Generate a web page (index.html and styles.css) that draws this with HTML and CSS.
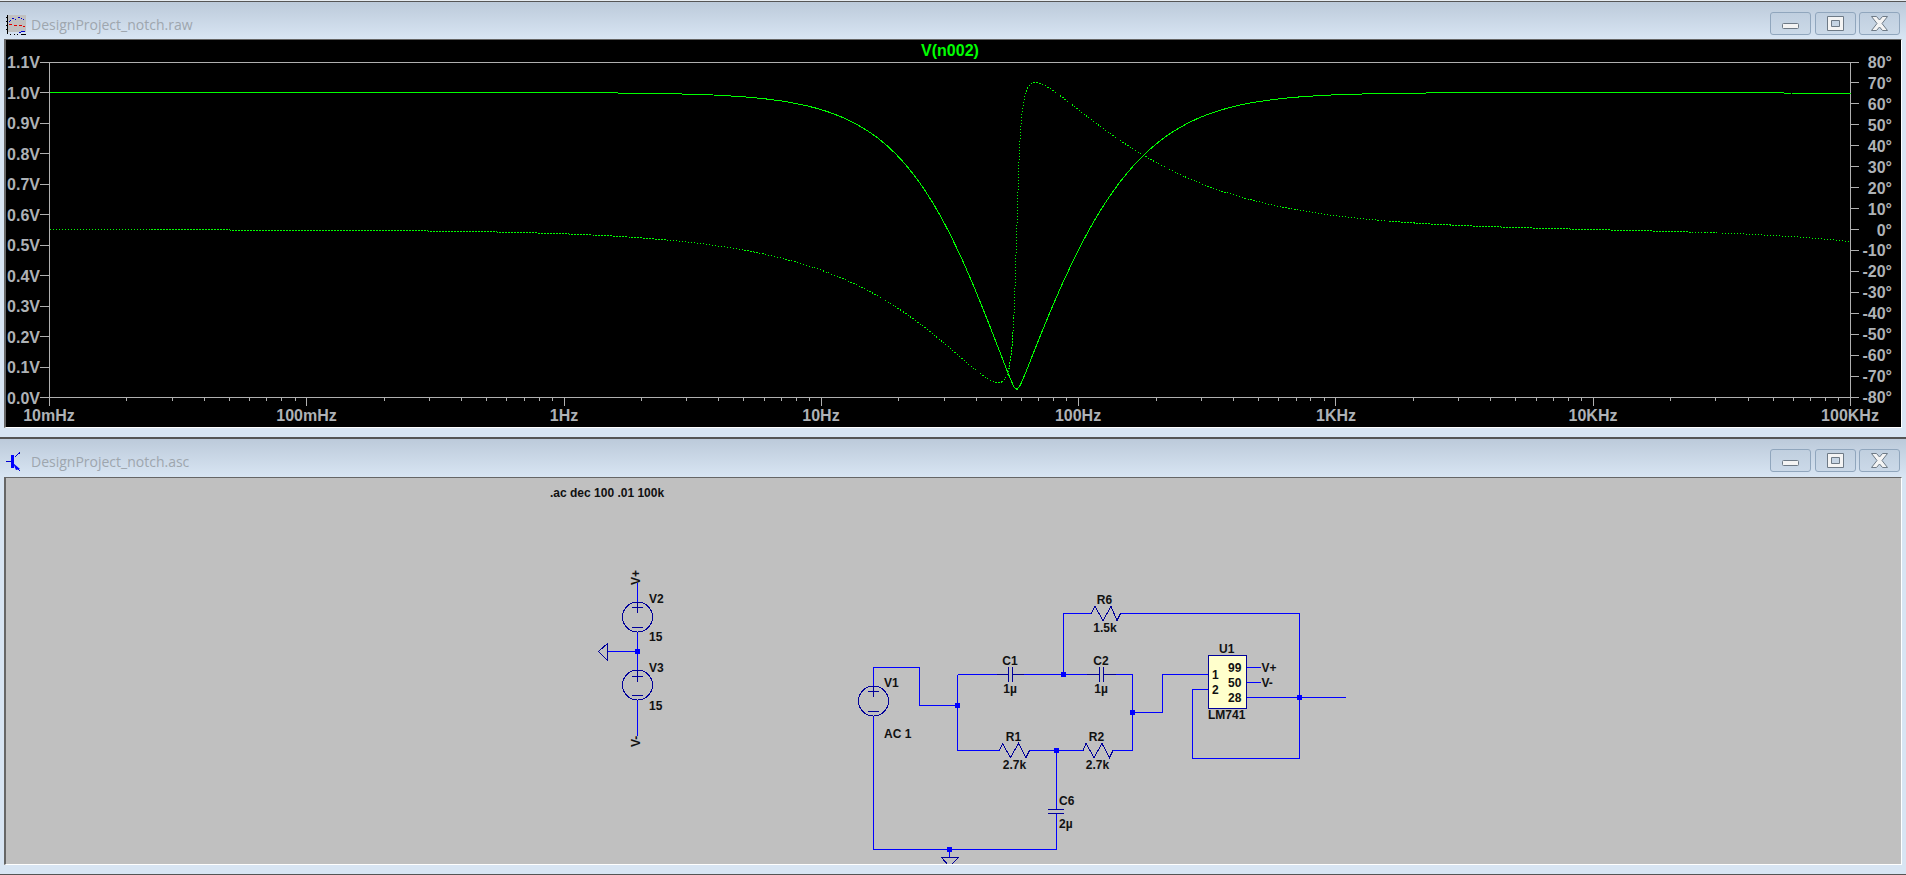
FILE: index.html
```html
<!DOCTYPE html>
<html lang="en">
<head>
<meta charset="utf-8">
<title>LTspice</title>
<link rel="stylesheet" href="styles.css">
</head>
<body>
<section class="window window-plot">
  <header class="titlebar">
    <svg class="app-icon" viewBox="0 0 20 20" width="20" height="20">
      <rect x="2" y="0" width="18" height="17" fill="#c0c0c0"/>
      <path class="i-black" d="M1.5 0V19M0 2.5H1M0 6.5H1M0 10.5H1M0 14.5H1M4 19.5H5M8 19.5H9M11 19.5H12M15 19.5H20"/>
      <path class="i-blue" stroke-dasharray="1 1" d="M3 7L7 3L10 5L13 2L19 5"/>
      <path class="i-red" stroke-dasharray="3 2" d="M3 9L9 11L13 10L19 12"/>
      <path class="i-blue" d="M13 17.5H15M15 16.5H19"/>
    </svg>
    <span class="doc-name">DesignProject_notch.raw</span>
    <div class="win-buttons">
      <button class="win-btn win-btn-min"><svg viewBox="0 0 17 6" width="17" height="6"><rect class="glyph" x=".5" y=".5" width="16" height="5" rx="1"/></svg></button>
      <button class="win-btn"><svg viewBox="0 0 17 15" width="17" height="15"><path class="glyph" fill-rule="evenodd" d="M.5 .5H16.5V14.5H.5ZM4.5 4.5V10.5H12.5V4.5Z"/></svg></button>
      <button class="win-btn"><svg viewBox="0 0 17 15" width="17" height="15"><path class="glyph" d="M.5 .5H5.5L8.5 4L11.5 .5H16.5L11 7.5L16.5 14.5H11.5L8.5 11L5.5 14.5H.5L6 7.5Z"/></svg></button>
    </div>
  </header>
  <div class="pane pane-plot">
    <svg class="canvas" viewBox="6 40 1895 387" width="1895" height="387">
      <path id="axes" class="axis"/>
      <path id="mag" class="trace"/>
      <path id="phase" class="trace trace-phase"/>
      <text class="plot-title" x="950" y="56">V(n002)</text>
      <g class="ylabels">
        <text x="40" y="68">1.1V</text><text x="40" y="98.5">1.0V</text><text x="40" y="129">0.9V</text><text x="40" y="159.5">0.8V</text><text x="40" y="190">0.7V</text><text x="40" y="220.5">0.6V</text><text x="40" y="251">0.5V</text><text x="40" y="281.5">0.4V</text><text x="40" y="312">0.3V</text><text x="40" y="342.5">0.2V</text><text x="40" y="373">0.1V</text><text x="40" y="403.5">0.0V</text>
      </g>
      <g class="ylabels">
        <text x="1892" y="68">80°</text><text x="1892" y="89">70°</text><text x="1892" y="110">60°</text><text x="1892" y="131">50°</text><text x="1892" y="152">40°</text><text x="1892" y="173">30°</text><text x="1892" y="194">20°</text><text x="1892" y="215">10°</text><text x="1892" y="236">0°</text><text x="1892" y="256">-10°</text><text x="1892" y="277">-20°</text><text x="1892" y="298">-30°</text><text x="1892" y="319">-40°</text><text x="1892" y="340">-50°</text><text x="1892" y="361">-60°</text><text x="1892" y="382">-70°</text><text x="1892" y="403">-80°</text>
      </g>
      <g class="xlabels">
        <text x="49" y="421">10mHz</text><text x="306.5" y="421">100mHz</text><text x="564" y="421">1Hz</text><text x="821" y="421">10Hz</text><text x="1078" y="421">100Hz</text><text x="1336" y="421">1KHz</text><text x="1593" y="421">10KHz</text><text x="1850" y="421">100KHz</text>
      </g>
    </svg>
  </div>
</section>

<section class="window window-schematic">
  <header class="titlebar">
    <svg class="app-icon" viewBox="0 0 20 20" width="20" height="20">
      <path class="i-blue" d="M0 10.5H5M14 1.5L9 6M9 15L14 20"/>
      <rect x="5" y="4" width="3" height="13" fill="#0000ff"/>
      <path d="M7 12L14 18L10 19Z" fill="#0000ff"/>
    </svg>
    <span class="doc-name">DesignProject_notch.asc</span>
    <div class="win-buttons">
      <button class="win-btn win-btn-min"><svg viewBox="0 0 17 6" width="17" height="6"><rect class="glyph" x=".5" y=".5" width="16" height="5" rx="1"/></svg></button>
      <button class="win-btn"><svg viewBox="0 0 17 15" width="17" height="15"><path class="glyph" fill-rule="evenodd" d="M.5 .5H16.5V14.5H.5ZM4.5 4.5V10.5H12.5V4.5Z"/></svg></button>
      <button class="win-btn"><svg viewBox="0 0 17 15" width="17" height="15"><path class="glyph" d="M.5 .5H5.5L8.5 4L11.5 .5H16.5L11 7.5L16.5 14.5H11.5L8.5 11L5.5 14.5H.5L6 7.5Z"/></svg></button>
    </div>
  </header>
  <div class="pane pane-schematic">
    <svg class="canvas" viewBox="6 478 1895 386" width="1895" height="386">
      <path class="wire" d="M873.5 686V667.5H919.5V705.5H957.5M957.5 674.5V750.5H999.5M957.5 674.5H997M1024 674.5H1087M1063.5 674.5V613.5H1091M1120.5 613.5H1299.5V758.5H1192.5V689.5H1208M1116 674.5H1132.5V750.5H1113M1029.5 750.5H1083M1056.5 750.5V809M1056.5 814V849.5H873.5V716M1132.5 712.5H1162.5V674.5H1208M949.5 849.5V857M1247 697.5H1345.5M1247 667.5H1261M1247 682.5H1261M637.5 583V602M637.5 632V670M637.5 700V736M637.5 651.5H608"/>
      <g class="part">
        <circle cx="873.5" cy="701" r="15"/><path d="M868 691.5H879M873.5 686V697M868 711.5H879"/>
        <circle cx="637.5" cy="617" r="15"/><path d="M632 607.5H643M637.5 602V613M632 627.5H643"/>
        <circle cx="637.5" cy="685" r="15"/><path d="M632 676.5H643M637.5 671V682M632 695.5H643"/>
        <path d="M607.5 643.5V660.5L598.5 651.5Z"/>
        <path d="M941.5 857.5H958.5L949.5 866.5Z"/>
        <path d="M1008.5 667V682M1012.5 667V682M997 674.5H1008M1013 674.5H1024"/>
        <path d="M1099.5 667V682M1103.5 667V682M1087 674.5H1099M1104 674.5H1116"/>
        <path d="M1048 809.5H1064M1048 813.5H1064"/>
        <path d="M1091 613.5L1095 606.5L1103 620.5L1111 606.5L1117 620.5L1120.5 613.5"/>
        <path d="M999.5 750.5L1002.5 743.5L1010.5 757.5L1018.5 743.5L1026 757.5L1029.5 750.5"/>
        <path d="M1083 750.5L1086 743.5L1094 757.5L1102 743.5L1109.5 757.5L1113 750.5"/>
        <rect class="ic" x="1208.5" y="655.5" width="38" height="53"/>
      </g>
      <g class="nodes">
        <rect x="635" y="649" width="5" height="5"/><rect x="955" y="703" width="5" height="5"/><rect x="1061" y="672" width="5" height="5"/><rect x="1130" y="710" width="5" height="5"/><rect x="1054" y="748" width="5" height="5"/><rect x="947" y="847" width="5" height="5"/><rect x="1297" y="695" width="5" height="5"/>
      </g>
      <g class="sch-text">
        <text x="550" y="497">.ac dec 100 .01 100k</text>
        <text x="649" y="603">V2</text><text x="649" y="641">15</text><text x="649" y="672">V3</text><text x="649" y="710">15</text>
        <text x="884" y="687">V1</text><text x="884" y="738">AC 1</text>
        <text class="mid" x="1010" y="665">C1</text><text class="mid" x="1010" y="693">1µ</text>
        <text class="mid" x="1101" y="665">C2</text><text class="mid" x="1101" y="693">1µ</text>
        <text class="mid" x="1104.5" y="604">R6</text><text class="mid" x="1105" y="632">1.5k</text>
        <text class="mid" x="1013.5" y="741">R1</text><text class="mid" x="1014.5" y="769">2.7k</text>
        <text class="mid" x="1096.5" y="741">R2</text><text class="mid" x="1097.5" y="769">2.7k</text>
        <text x="1059" y="805">C6</text><text x="1059" y="828">2µ</text>
        <text x="1219" y="653">U1</text><text x="1208" y="719">LM741</text>
        <text x="1212" y="679">1</text><text x="1212" y="694">2</text>
        <text x="1228" y="672">99</text><text x="1228" y="687">50</text><text x="1228" y="702">28</text>
        <text x="1261.5" y="672">V+</text><text x="1261.5" y="687">V-</text>
        <text class="rot-a" x="0" y="0">V+</text>
        <text class="rot-b" x="0" y="0">V-</text>
      </g>
    </svg>
  </div>
</section>
<script src="plot.js"></script>
</body>
</html>
```
FILE: styles.css
```css
* { box-sizing: border-box; }
html, body { margin: 0; padding: 0; height: 875px; overflow: hidden; background: #d8e5f3; }
body { display: flex; flex-direction: column; }

.window { display: flex; flex-direction: column; flex: none; background: #d8e5f3; }
.window-plot { height: 437px; border-top: 1px solid #e6ebf0; }
.window-schematic { height: 438px; border-top: 2px solid #555; border-bottom: 1px solid #555; }

.titlebar {
  display: flex; align-items: flex-start; flex: none;
  background: linear-gradient(#bccada, #d8e5f3);
  padding: 10px 6px 0 6px;
}
.window-plot .titlebar { height: 38px; border-top: 1px solid #555; }
.window-schematic .titlebar { height: 38px; }

.app-icon { flex: none; margin-top: 2px; }
.window-plot .app-icon { margin-top: 3px; }
.i-black, .i-blue, .i-red { fill: none; stroke-width: 1; shape-rendering: crispEdges; }
.i-black { stroke: #000; }
.i-blue { stroke: #0000d0; }
.i-red { stroke: #e00000; }

.doc-name {
  font: 14px "Open Sans", "Noto Sans", sans-serif;
  color: #9ea6ae;
  margin: 2px 0 0 5px;
  line-height: 22px;
  white-space: nowrap;
}
.win-buttons { margin-left: auto; display: flex; gap: 3px; }
.win-btn {
  width: 41px; height: 23px; padding: 0;
  display: flex; align-items: center; justify-content: center;
  border: 1px solid #90a6bd; border-radius: 3px;
  background: linear-gradient(#c0cfdf, #cbd9e8);
}
.win-btn-min { margin-right: 1px; padding-top: 5px; }
.glyph { fill: #f4f4f4; stroke: #6e7a86; stroke-width: 1; }

.pane {
  margin: 0 4px 0 4px;
  border-top: 1px solid #666; border-left: 2px solid #666;
  border-right: 1px solid #fff; border-bottom: 1px solid #fff;
  overflow: hidden; flex: none; width: 1898px;
}
.pane-plot { height: 389px; background: #000; }
.pane-schematic { height: 388px; background: #c0c0c0; }
.canvas { display: block; }

.axis { fill: none; stroke: #b0b0b0; stroke-width: 1; shape-rendering: crispEdges; }
.trace { fill: none; stroke: #00ff00; stroke-width: 1; shape-rendering: crispEdges; }
.trace-phase { stroke-dasharray: 1.3 1.7; }

.plot-title { font: bold 16px "Liberation Sans", sans-serif; fill: #00ff00; text-anchor: middle; }
.ylabels text { font: bold 16px "Liberation Sans", sans-serif; fill: #aeb2b6; text-anchor: end; }
.xlabels text { font: bold 16px "Liberation Sans", sans-serif; fill: #aeb2b6; text-anchor: middle; }

.wire { fill: none; stroke: #0000ff; stroke-width: 1; shape-rendering: crispEdges; }
.part { fill: none; stroke: #00009a; stroke-width: 1; shape-rendering: crispEdges; }
.ic { fill: #ffffcc; }
.nodes { fill: #0000ff; }
.sch-text text { font: bold 12px "Liberation Sans", sans-serif; fill: #111; }
.sch-text .mid { text-anchor: middle; }
.sch-text .rot-a { transform: translate(640px, 585px) rotate(-90deg); }
.sch-text .rot-b { transform: translate(640px, 747px) rotate(-90deg); }
```
FILE: plot.js
```js
// Computes the AC response of the twin-T notch and draws axes and traces.
(function () {
  var X0 = 49.5, DEC = (1850.5 - 49.5) / 7;
  var V0 = 397.5, VSCALE = 305;
  var P0 = 229.75, PSCALE = (397.5 - 62) / 160;
  var F0 = 1 / (2 * Math.PI * 2700 * 1e-6), G = 2700 / 1500, FT = 1e6;

  function mul(a, b) { return [a[0] * b[0] - a[1] * b[1], a[0] * b[1] + a[1] * b[0]]; }
  function div(a, b) {
    var d = b[0] * b[0] + b[1] * b[1];
    return [(a[0] * b[0] + a[1] * b[1]) / d, (a[1] * b[0] - a[0] * b[1]) / d];
  }
  function xAt(dec) { return X0 + dec * DEC; }

  var mag = [], phase = [];
  for (var i = 0; i <= 700; i++) {
    var f = Math.pow(10, -2 + i / 100);
    var w = f / F0;
    var num = [G - 2 * w * w, 2 * w - 2 * w * w * w];
    var den = [G - 6 * w * w, (2 + 2 * G) * w - 2 * w * w * w];
    var h = mul(div(num, den), div([1, 0], [1, f / FT]));
    var x = xAt(i / 100).toFixed(1);
    var m = Math.sqrt(h[0] * h[0] + h[1] * h[1]);
    var p = Math.atan2(h[1], h[0]) * 180 / Math.PI;
    mag.push(x + ' ' + (V0 - VSCALE * m).toFixed(1));
    phase.push(x + ' ' + (P0 - PSCALE * p).toFixed(1));
  }
  document.getElementById('mag').setAttribute('d', 'M' + mag.join('L'));
  document.getElementById('phase').setAttribute('d', 'M' + phase.join('L'));

  var d = 'M49.5 62H1850.5V405.5M49.5 62V405.5M49.5 397.5H1850.5';
  for (var v = 0; v <= 11; v++) {
    d += 'M40 ' + (Math.floor(397.5 - v * 30.5) + .5) + 'H49';
  }
  for (var a = 0; a <= 16; a++) {
    d += 'M1851 ' + (Math.floor(62 + a * PSCALE * 10) + .5) + 'H1859';
  }
  for (var k = 0; k < 7; k++) {
    for (var s = 2; s <= 9; s++) {
      d += 'M' + (Math.floor(xAt(k + Math.log10(s))) + .5) + ' 398V401';
    }
    d += 'M' + (Math.floor(xAt(k + 1)) + .5) + ' 398V405.5';
  }
  document.getElementById('axes').setAttribute('d', d);
})();
```
